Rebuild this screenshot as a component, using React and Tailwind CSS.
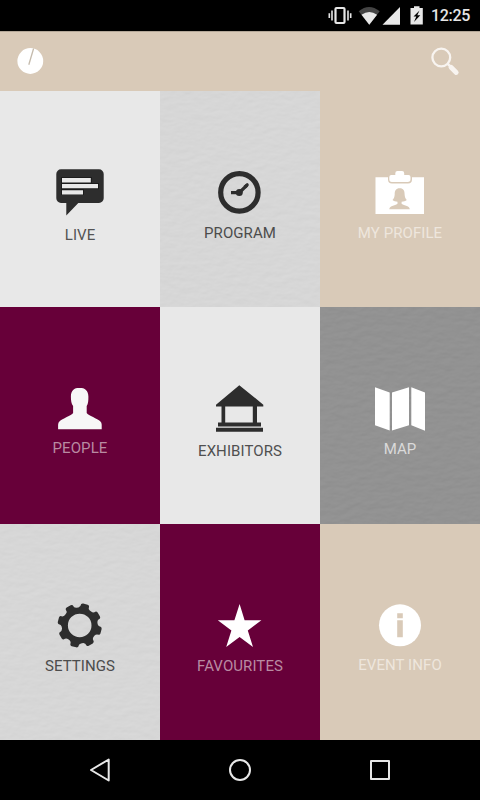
import React from "react";

const DARK = "#2d2d2d";

function gearPath(cx, cy) {
  const pt = (r, deg) => {
    const a = ((deg - 90) * Math.PI) / 180;
    return `${(cx + r * Math.cos(a)).toFixed(2)} ${(cy + r * Math.sin(a)).toFixed(2)}`;
  };
  let d = "";
  for (let i = 0; i < 8; i++) {
    const a = 15 + i * 45;
    d += `${i ? "L" : "M"}${pt(21.4, a - 11)} Q${pt(22.2, a - 9)} ${pt(22.2, a - 6)} L${pt(22.2, a + 6)} Q${pt(22.2, a + 9)} ${pt(21.4, a + 11)} Q${pt(18.4, a + 12)} ${pt(18, a + 19)} L${pt(18, a + 26)} Q${pt(18.4, a + 33)} ${pt(21.4, a + 34)}`;
  }
  return d + "Z";
}

const LiveIcon = () => (
  <svg className="h-15 w-15" viewBox="50 161 60 60">
    <path fill={DARK} d="M61 169.3h38a4.7 4.7 0 0 1 4.7 4.7v24.200a4.700 4.700 0 0 1-4.700 4.700H78.300L66.300 215.500V202.900H61a4.700 4.700 0 0 1-4.700-4.700V174a4.700 4.700 0 0 1 4.700-4.700z" />
    <path fill="#000" d="M61 177h31v6H61zM61 183h38v6.300H61zM61 189.300h23v5.700H61z" opacity=".4" />
    <path fill="#e8e8e8" d="M62 178h28.800v4.500H62zM62 184h36v4.300H62zM62 190.200h21v4.300H62z" />
  </svg>
);

const ProgramIcon = () => (
  <svg className="h-15 w-15" viewBox="210 161 60 60">
    <circle cx="239.400" cy="192.400" r="18.700" fill="none" stroke={DARK} strokeWidth="5.200" />
    <path d="M231 192.600h8.500M239.500 192.500L247 185.200" fill="none" stroke={DARK} strokeWidth="3.200" />
    <path d="M245.500 186.500l1.700-1.700" stroke={DARK} strokeWidth="3.200" strokeLinecap="round" />
    <circle cx="239.300" cy="192.600" r="3.500" fill={DARK} />
  </svg>
);

const ProfileIcon = () => (
  <svg className="h-15 w-15" viewBox="370 161 60 60">
    <path fill="#fff" d="M375.500 177.300H388v2.200a4 4 0 0 0 4 4h16a4 4 0 0 0 4-4v-2.200h12V214h-48.500z" />
    <path fill="#fff" d="M389.300 179.300v-2.300q0-2 2-2h4v-1.800q0-2.200 2.200-2.200h4.500q2.200 0 2.200 2.200v1.800h4.300q2 0 2 2v2.300q0 2.700-2.700 2.700h-16q-2.500 0-2.500-2.700z" />
    <path fill="#d9cab8" d="M399.700 188.300c-3.800 0-5 2.500-5 6 0 2.700-1 4.500-2.200 5.800 1.300 1.400 3 1.600 5 1.600v2c-1.200 1.700-8.200 1.500-8.200 5.500h20.500c0-4-7-3.800-8.200-5.500v-2c2 0 3.900-.2 5.200-1.600-1.200-1.300-2.200-3.100-2.200-5.800 0-3.500-1.100-6-4.900-6z" />
  </svg>
);

const PeopleIcon = () => (
  <svg className="h-15 w-15" viewBox="50 377.33 60 60">
    <path fill="#f7f7f7" d="M79.500 388.200c-5.500 0-8.600 3.200-8.600 8.600 0 4.300.5 7.500 2.200 9.500v7c-1.500 2.500-11 5.700-13.500 8.200q-1.500 1.300-1.500 3.500v4.500h43.600V425q0-2.200-1.500-3.500c-2.500-2.500-12-5.700-13.500-8.200v-7c1.500-2 1.700-5.200 1.700-9.500 0-5.400-3.400-8.600-8.900-8.600z" />
  </svg>
);

const ExhibitorsIcon = () => (
  <svg className="h-15 w-15" viewBox="210 377.33 60 60">
    <path fill={DARK} d="M239.300 385.500L263.300 405v1.800H257v16h4v4h-43v-4h3.500v-16H216V405zM225.200 406.800v16h27.600v-16zM216 428.200h47v4h-47z" fillRule="evenodd" />
  </svg>
);

const MapIcon = () => (
  <svg className="h-15 w-15" viewBox="370 377.33 60 60">
    <path fill="#fff" d="M375 387.500l14.700 5.300v38L375 425.600zM392 392.800l17-5.300v38l-17 5.300zM411.300 387.500l13.700 5.300v38.300l-13.700-5.500z" />
  </svg>
);

const SettingsIcon = () => (
  <svg className="h-15 w-15" viewBox="50 593.67 60 60">
    <path fill={DARK} fillRule="evenodd" d={gearPath(79.7, 625.1) + "M67.900 625.100a11.800 11.800 0 1 0 23.600 0a11.800 11.800 0 1 0-23.600 0z"} />
  </svg>
);

const StarIcon = () => (
  <svg className="h-15 w-15" viewBox="210 593.67 60 60">
    <path fill="#fff" d="M239.600 603.700l5 16.200h16.800l-13.600 10.200 5.200 16.600-13.400-10.100-13.400 10.100 5.200-16.600-13.600-10.200h16.600z" />
  </svg>
);

const InfoIcon = () => (
  <svg className="h-15 w-15" viewBox="370 593.67 60 60">
    <circle cx="400" cy="625" r="21" fill="#fff" />
    <path fill="#d9cab8" d="M397.200 613h5.600v4.800h-5.600zM397.200 620h5.600v16.800h-5.600z" />
  </svg>
);

function Paper({ id, seed, strength }) {
  return (
    <svg className="absolute inset-0 h-full w-full" aria-hidden="true">
      <filter id={id} x="0" y="0" width="100%" height="100%" colorInterpolationFilters="sRGB">
        <feTurbulence type="fractalNoise" baseFrequency="0.09 0.18" numOctaves="3" seed={seed} result="grain" />
        <feDiffuseLighting in="grain" surfaceScale={strength} lightingColor="#fff" result="lit">
          <feDistantLight azimuth="250" elevation="60" />
        </feDiffuseLighting>
        <feColorMatrix in="lit" type="matrix" values="0 0 0 0 0  0 0 0 0 0  0 0 0 0 0  -0.300 0 0 0 0.280" />
      </filter>
      <rect width="100%" height="100%" filter={`url(#${id})`} />
    </svg>
  );
}

const tiles = [
  { label: "LIVE", Icon: LiveIcon, bg: "bg-[#e8e8e8]", text: "mt-[4px] text-[#545454]" },
  { label: "PROGRAM", Icon: ProgramIcon, bg: "bg-[#dbdbdb]", text: "mt-[2px] text-[#4c4c4c]", paper: 3, strength: 0.28 },
  { label: "MY PROFILE", Icon: ProfileIcon, bg: "bg-[#d9cab8]", text: "mt-[2px] text-[#eee6dd]" },
  { label: "PEOPLE", Icon: PeopleIcon, bg: "bg-[#670039]", text: "mt-[1px] text-[#b98ba2]" },
  { label: "EXHIBITORS", Icon: ExhibitorsIcon, bg: "bg-[#e8e8e8]", text: "mt-[4px] text-[#505050]" },
  { label: "MAP", Icon: MapIcon, bg: "bg-[#959595]", text: "mt-[2px] text-[#dadada]", paper: 8, strength: 0.45 },
  { label: "SETTINGS", Icon: SettingsIcon, bg: "bg-[#dbdbdb]", text: "mt-[2px] text-[#4c4c4c]", paper: 3, strength: 0.28 },
  { label: "FAVOURITES", Icon: StarIcon, bg: "bg-[#670039]", text: "mt-[2px] text-[#b98ba2]" },
  { label: "EVENT INFO", Icon: InfoIcon, bg: "bg-[#d9cab8]", text: "mt-[1px] text-[#eee6dd]" },
];

function Tile({ label, Icon, bg, text, paper, strength }) {
  return (
    <button className={`relative flex flex-col items-center overflow-hidden pt-[70px] ${bg}`}>
      {paper && <Paper id={`paper-${label}`} seed={paper} strength={strength} />}
      <span className="relative block"><Icon /></span>
      <span className={`relative text-[15px] leading-5 tracking-[0.08px] whitespace-nowrap ${text}`}>{label}</span>
    </button>
  );
}

function StatusBar() {
  return (
    <div className="flex h-[31px] shrink-0 items-center justify-end bg-black pr-[10px]">
      <svg className="h-[31px] w-[100px]" viewBox="326 0 100 31">
        <rect x="335.500" y="8" width="9" height="15" rx="1" fill="none" stroke="#e6e6e6" strokeWidth="2.200" />
        <path d="M332 10.500v10M348 10.500v10M329.300 13.200v4.800M350.700 13.200v4.800" stroke="#e6e6e6" strokeWidth="1.600" />
        <path d="M358.700 11.200q10.300-8.500 21 0L369.300 24.700z" fill="#444" />
        <path d="M361.500 14.700q7.800-5.200 15.600 0L369.300 24.700z" fill="#e8e8e8" />
        <path d="M400 7v17.700h-17.500z" fill="#e8e8e8" />
        <path d="M414 6.200h5.500v1.900h3.300v16.500h-12.300V8.100h3.500z" fill="#e8e8e8" />
        <path d="M419.500 10.500l-6 6h2.800l-2.300 5.500 6.300-6.800h-3z" fill="#000" />
      </svg>
      <span className="ml-[5px] w-[39px] text-[16px] leading-none font-medium tracking-[-0.3px] whitespace-nowrap text-[#e6e6e6]">12:25</span>
    </div>
  );
}

export default function App() {
  return (
    <div className="flex h-[800px] w-[480px] flex-col overflow-hidden bg-black font-['Roboto',sans-serif]">
      <StatusBar />
      <header className="flex h-[60px] shrink-0 items-center justify-between border-t border-[#b3a798] bg-[#d9cab8]">
        <svg className="h-[59px] w-[60px]" viewBox="0 32 60 59">
          <circle cx="30.300" cy="61" r="12.900" fill="#fff" />
          <path d="M33.600 48.500L28.800 64.700" stroke="#c4baac" strokeWidth="1.300" />
        </svg>
        <svg className="h-[59px] w-[60px]" viewBox="420 32 60 59">
          <circle cx="441.300" cy="57.500" r="8.900" fill="none" stroke="#f8f4f0" strokeWidth="2.300" />
          <path d="M447.500 63.700l3 3" stroke="#f8f4f0" strokeWidth="2.400" />
          <path d="M451 67.200l5.200 5.300" stroke="#f8f4f0" strokeWidth="4.800" strokeLinecap="round" />
        </svg>
      </header>
      <main className="grid min-h-0 flex-1 grid-cols-3 grid-rows-3">
        {tiles.map((t) => <Tile key={t.label} {...t} />)}
      </main>
      <nav className="flex h-[60px] shrink-0 items-center justify-center gap-[80px] bg-black">
        <svg className="h-[60px] w-[60px]" viewBox="70 740 60 60">
          <path d="M108.700 759.500v21L91 770z" fill="none" stroke="#e8e8e8" strokeWidth="2" strokeLinejoin="round" />
        </svg>
        <svg className="h-[60px] w-[60px]" viewBox="210 740 60 60">
          <circle cx="240" cy="770" r="10" fill="none" stroke="#e8e8e8" strokeWidth="2" />
        </svg>
        <svg className="h-[60px] w-[60px]" viewBox="350 740 60 60">
          <rect x="371" y="761" width="18" height="18" fill="none" stroke="#e8e8e8" strokeWidth="2" strokeLinejoin="round" />
        </svg>
      </nav>
    </div>
  );
}
